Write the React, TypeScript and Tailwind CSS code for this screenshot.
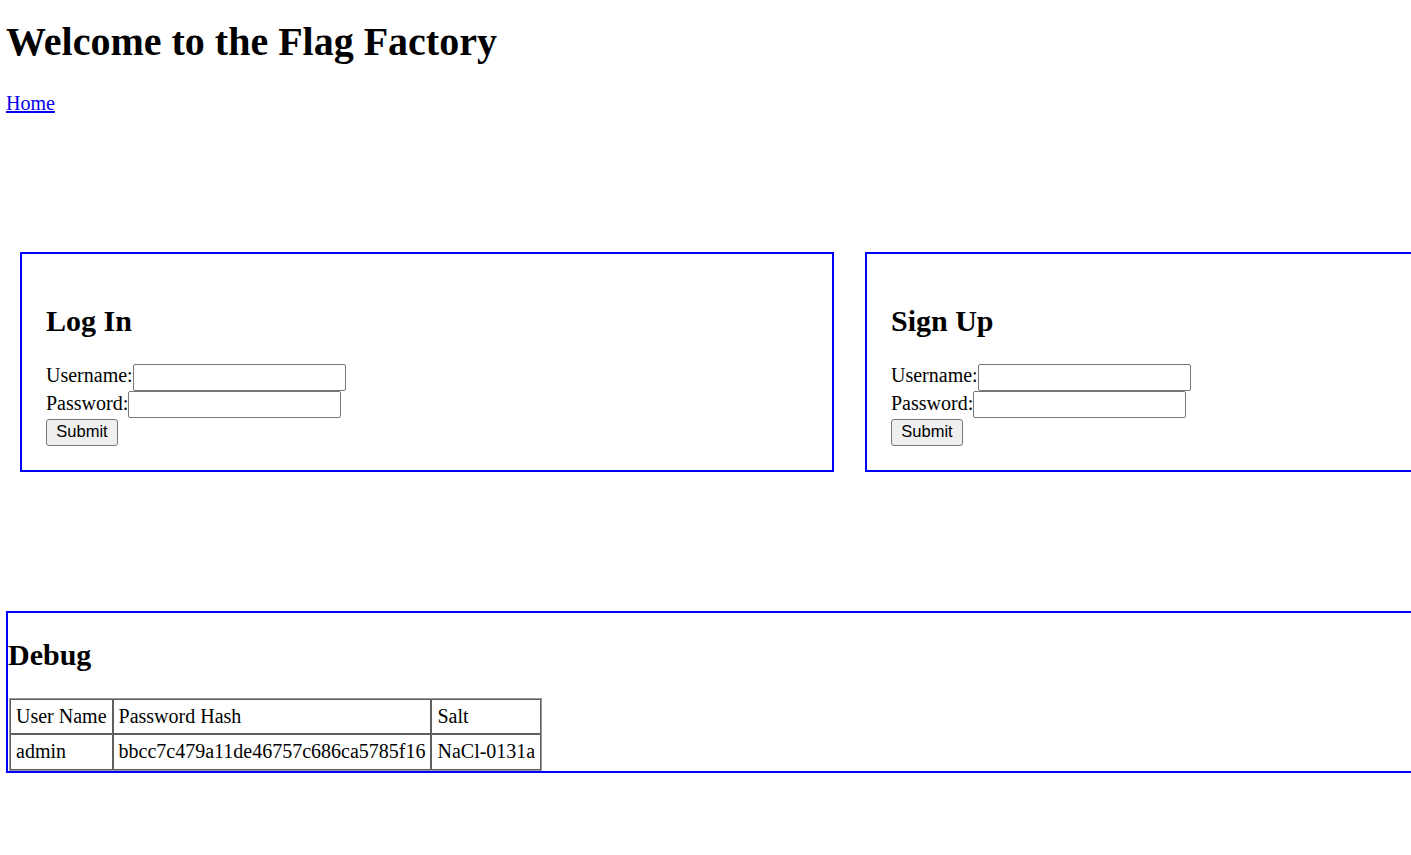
import { useState } from "react";

const serif = "font-['Liberation_Serif','Times_New_Roman',serif]";

function AuthBox({ title }: { title: string }) {
  const [username, setUsername] = useState("");
  const [password, setPassword] = useState("");
  return (
    <div className="w-[814px] shrink-0 border-2 border-[#0000ff] p-6">
      <h2 className="mt-[26px] mb-[25px] text-[30px] font-bold leading-[34.5px]">
        {title}
      </h2>
      <form onSubmit={(e) => e.preventDefault()}>
        <div className="flex h-[27.5px] items-center">
          <label className="mb-[3px] leading-[23px]">Username:</label>
          <input
            type="text"
            className="h-[27.5px] w-[213px] rounded-[2px] border border-[#767676] bg-white px-[2px]"
            value={username}
            onChange={(e) => setUsername(e.target.value)}
          />
        </div>
        <div className="flex h-[27.5px] items-center">
          <label className="mb-[3px] leading-[23px]">Password:</label>
          <input
            type="password"
            className="h-[27px] w-[213px] rounded-[2px] border border-[#767676] bg-white px-[2px]"
            value={password}
            onChange={(e) => setPassword(e.target.value)}
          />
        </div>
        <div className="flex h-[27.5px] items-center">
          <button
            type="submit"
            className="h-[27.5px] w-[72px] rounded-[3px] border border-[#767676] bg-[#efefef] pb-[2px] font-['Liberation_Sans',Arial,sans-serif] text-[16.5px] leading-none text-black"
          >
            Submit
          </button>
        </div>
      </form>
    </div>
  );
}

export default function App() {
  const users = [
    {
      name: "admin",
      hash: "bbcc7c479a11de46757c686ca5785f16",
      salt: "NaCl-0131a",
    },
  ];
  const cell =
    "border border-[#5f5f5f] px-[5px] py-[5px] text-left align-middle text-[20px] font-normal leading-[23.5px] whitespace-nowrap";

  return (
    <div
      className={`min-h-screen w-full overflow-hidden bg-white text-[20px] text-black ${serif}`}
    >
      <div className="pl-[6px] pt-[18px]">
        <h1 className="mb-[27px] text-[40px] font-bold leading-[47px]">
          Welcome to the Flag Factory
        </h1>
        <div className="leading-[23px]">
          <a href="#" className="text-[#0000ee] underline">
            Home
          </a>
        </div>

        <div className="mt-[137px] ml-[14px] flex gap-[31px]">
          <AuthBox title="Log In" />
          <AuthBox title="Sign Up" />
        </div>

        <div className="mt-[139px] w-[1480px] shrink-0 border-2 border-[#0000ff]">
          <h2 className="mt-[25px] mb-[25px] text-[30px] font-bold leading-[34.5px]">
            Debug
          </h2>
          <table className="ml-px border-separate border-spacing-0 border border-[#9a9a9a]">
            <thead>
              <tr>
                <th className={cell}>User Name</th>
                <th className={cell}>Password Hash</th>
                <th className={cell}>Salt</th>
              </tr>
            </thead>
            <tbody>
              {users.map((u) => (
                <tr key={u.name}>
                  <td className={cell}>{u.name}</td>
                  <td className={cell}>{u.hash}</td>
                  <td className={cell}>{u.salt}</td>
                </tr>
              ))}
            </tbody>
          </table>
        </div>
      </div>
    </div>
  );
}
